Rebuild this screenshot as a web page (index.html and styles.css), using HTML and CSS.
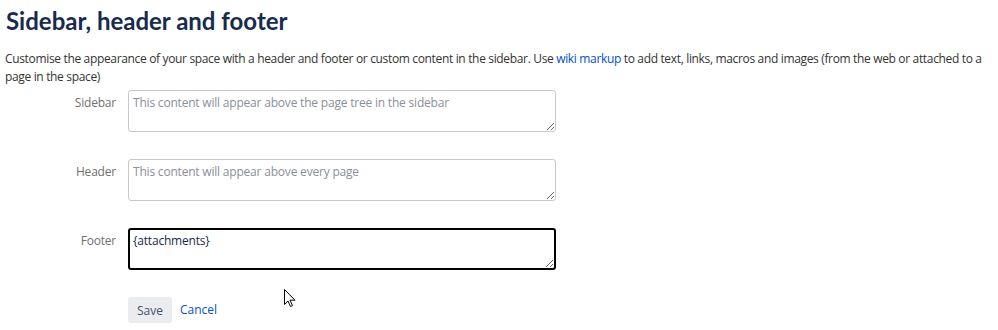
FILE: index.html
```html
<!DOCTYPE html>
<html lang="en">
<head>
  <meta charset="UTF-8">
  <title>Sidebar, header and footer</title>
  <link rel="stylesheet" href="styles.css">
</head>
<body>
  <h1>Sidebar, header and footer</h1>

  <p class="intro">Customise the appearance of your space with a header and footer or custom content in the sidebar. Use <a href="#">wiki markup</a> to add text, links, macros and images (from the web or attached to a page in the space)</p>

  <form class="decorator-form">
    <div class="field">
      <label for="sidebar">Sidebar</label>
      <textarea id="sidebar" placeholder="This content will appear above the page tree in the sidebar"></textarea>
    </div>
    <div class="field">
      <label for="header">Header</label>
      <textarea id="header" placeholder="This content will appear above every page"></textarea>
    </div>
    <div class="field">
      <label for="footer">Footer</label>
      <textarea id="footer" class="focused">{attachments}</textarea>
    </div>
    <div class="buttons">
      <button type="button">Save</button>
      <a href="#">Cancel</a>
      <svg class="pointer" width="12" height="19" viewBox="0 0 12 19">
        <path d="M0.5 0.5 L0.5 15.5 L4 12 L6.5 17.5 L8.5 16.6 L6 11.2 L11 11.2 Z" fill="#fff" stroke="#000" stroke-width="1"/>
      </svg>
    </div>
  </form>
</body>
</html>
```

FILE: styles.css
```css
body {
  font-family: "Open Sans", sans-serif;
  color: #333;
  margin: 0;
  padding: 0 6px;
}

h1 {
  font-family: Lato, sans-serif;
  font-size: 24px;
  font-weight: 700;
  color: #172b4d;
  margin: 5px 0 0 0;
  line-height: 32px;
}

.intro {
  font-size: 12px;
  letter-spacing: -0.34px;
  line-height: 18px;
  margin: 13px 0 0 -1px;
}

a {
  color: #0052cc;
  text-decoration: none;
}

.decorator-form {
  margin-top: 4px;
}

.field {
  display: flex;
  align-items: flex-start;
  margin-bottom: 27px;
}

.field label {
  width: 110px;
  text-align: right;
  padding-right: 12px;
  padding-top: 4px;
  font-size: 12px;
  letter-spacing: -0.2px;
  color: #707070;
}

textarea {
  width: 428px;
  height: 42px;
  box-sizing: border-box;
  border: 1px solid #c8c8c8;
  border-radius: 3px;
  padding: 3px 4px;
  font-family: "Open Sans", sans-serif;
  font-size: 12px;
  letter-spacing: -0.2px;
  color: #172b4d;
  resize: vertical;
}

textarea::placeholder {
  color: #8a8f99;
}

textarea.focused {
  border: 2px solid #000;
  padding: 2px 3px;
}

.buttons {
  position: relative;
  display: flex;
  align-items: center;
  gap: 8px;
  margin-left: 122px;
}

.buttons button {
  background: #ebecf0;
  border: none;
  border-radius: 3px;
  height: 26px;
  padding: 0 9px;
  font-family: "Open Sans", sans-serif;
  font-size: 12px;
  color: #42526e;
}

.buttons a {
  font-size: 12px;
  margin-top: -1px;
}

.pointer {
  position: absolute;
  left: 156px;
  top: -8px;
}
```
